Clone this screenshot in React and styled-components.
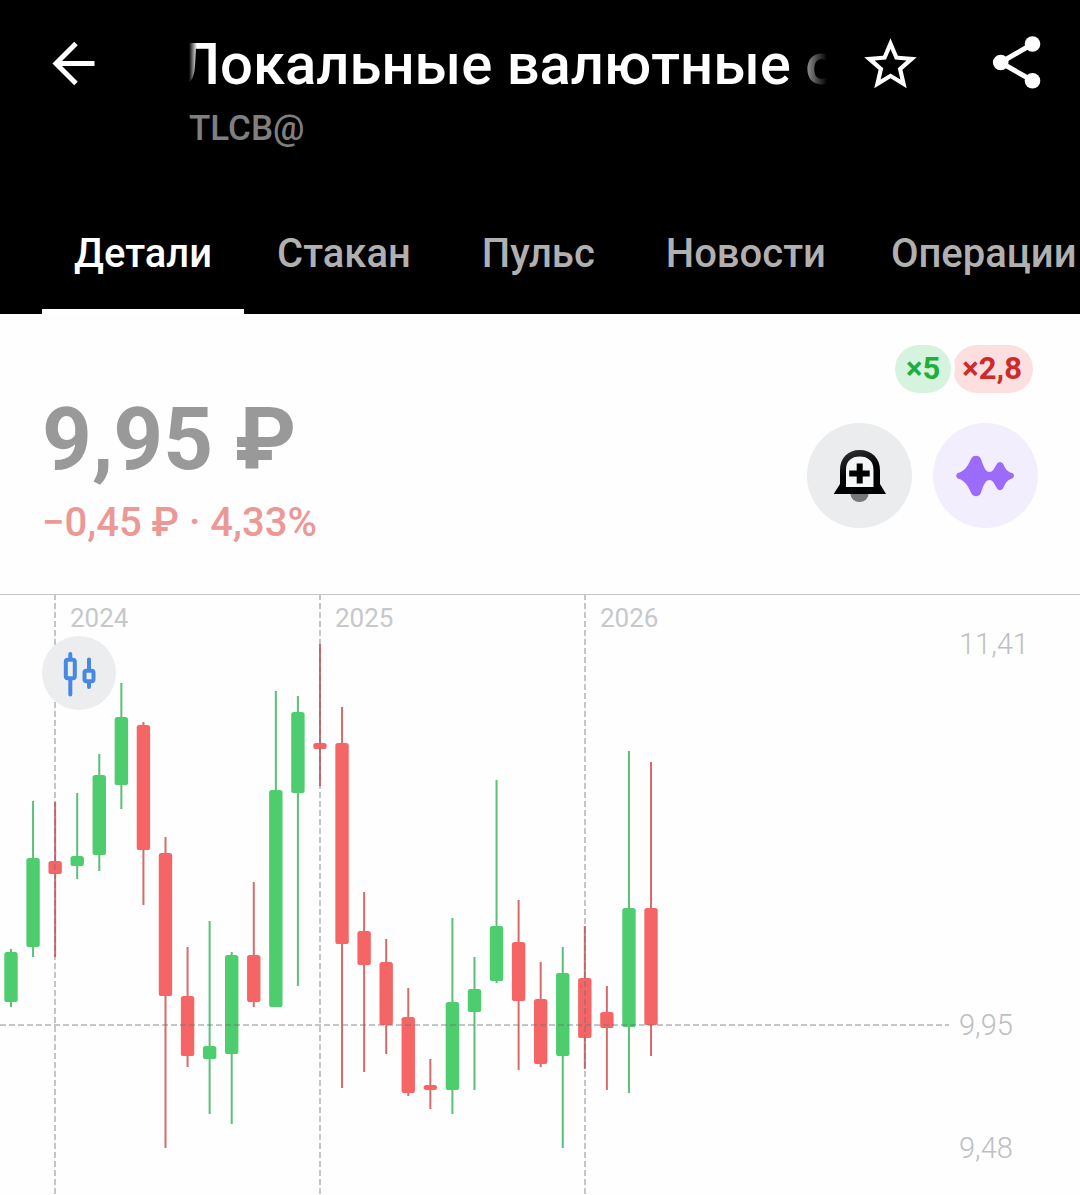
import React, { useState } from 'react'
import styled, { createGlobalStyle } from 'styled-components';

const tabs = ['Детали', 'Стакан', 'Пульс', 'Новости', 'Операции'];

const years = [
  { label: '2024', x: 55 },
  { label: '2025', x: 320 },
  { label: '2026', x: 585 },
];

const prices = [
  { label: '11,41', y: 654 },
  { label: '9,95', y: 1035 },
  { label: '9,48', y: 1158 },
];

// [direction, high, body top, body bottom, low]
const candles = [
  ['up', 949, 952, 1002, 1007],
  ['up', 801, 858, 947, 957],
  ['down', 802, 861, 874, 957],
  ['up', 793, 856, 866, 879],
  ['up', 754, 775, 855, 871],
  ['up', 683, 717, 785, 809],
  ['down', 722, 725, 850, 905],
  ['down', 837, 853, 996, 1148],
  ['down', 947, 996, 1056, 1067],
  ['up', 921, 1046, 1059, 1114],
  ['up', 952, 955, 1054, 1124],
  ['down', 882, 955, 1002, 1007],
  ['up', 691, 790, 1007, 1007],
  ['up', 696, 712, 793, 986],
  ['down', 644, 743, 749, 786],
  ['down', 707, 743, 944, 1088],
  ['down', 892, 931, 965, 1072],
  ['down', 939, 962, 1025, 1054],
  ['down', 988, 1017, 1093, 1096],
  ['down', 1059, 1085, 1090, 1109],
  ['up', 918, 1002, 1090, 1114],
  ['up', 957, 989, 1012, 1090],
  ['up', 780, 926, 981, 983],
  ['down', 900, 942, 1001, 1070],
  ['down', 962, 999, 1064, 1067],
  ['up', 947, 973, 1056, 1148],
  ['down', 926, 978, 1038, 1069],
  ['down', 986, 1012, 1028, 1090],
  ['up', 751, 908, 1027, 1093],
  ['down', 762, 908, 1025, 1056],
];

const colors = { up: '#4ecd6f', down: '#f66565' };
const wicks = { up: '#5abf78', down: '#d96a6a' };

const Chart = () => {
  return (
    <ChartSvg viewBox="0 595 1080 600" role="img" aria-label="График цены">
      {candles.map(([dir, high, top, bottom, low], i) => {
        const x = 11 + i * 22.07;
        return (
          <g key={i}>
            <line x1={x} x2={x} y1={high} y2={low} stroke={wicks[dir]} strokeWidth="2" />
            <rect x={x - 6.7} y={top} width="13.4" height={bottom - top} rx="2.6" fill={colors[dir]} />
          </g>
        );
      })}
      {years.map((year) => (
        <g key={year.label}>
          <GridLine x1={year.x} x2={year.x} y1="594" y2="1195" />
          <YearLabel x={year.x + 15} y="627">{year.label}</YearLabel>
        </g>
      ))}
      <GridLine x1="0" x2="949" y1="1025" y2="1025" />
      {prices.map((price) => (
        <PriceLabel key={price.label} x="959" y={price.y}>{price.label}</PriceLabel>
      ))}
    </ChartSvg>
  )
}

const BackIcon = () => (
  <svg width="64" height="64" viewBox="0 0 64 64" fill="none" stroke="currentColor" strokeWidth="5">
    <path d="M52.500 33.500H15M34 13.500L14 33.500L34 53.500" />
  </svg>
)

const StarIcon = () => (
  <svg width="63" height="63" viewBox="0 0 24 24" fill="currentColor">
    <path d="M22 9.24l-7.19-.62L12 2 9.19 8.63 2 9.24l5.46 4.73L5.82 21 12 17.27 18.18 21l-1.63-7.03L22 9.24zM12 15.4l-3.76 2.27 1-4.28-3.32-2.88 4.38-.38L12 6.1l1.71 4.04 4.38.38-3.32 2.88 1 4.28L12 15.4z" />
  </svg>
)

const ShareIcon = () => (
  <svg width="63" height="63" viewBox="0 0 63 63" fill="currentColor">
    <path d="M47.500 11L15.500 29.500L47.500 47.700" fill="none" stroke="currentColor" strokeWidth="5" />
    <circle cx="47.500" cy="11" r="7.800" />
    <circle cx="15.700" cy="29.500" r="7.800" />
    <circle cx="47.500" cy="47.700" r="7.800" />
  </svg>
)

const BellIcon = () => (
  <svg width="105" height="105" viewBox="0 0 105 105">
    <defs>
      <linearGradient id="bell" x1="0" y1="0" x2="0.4" y2="1">
        <stop offset="0" stopColor="#3a3b3c" />
        <stop offset="0.6" stopColor="#000" />
      </linearGradient>
    </defs>
    <path d="M43.500 71a9 8 0 0 0 18 0z" fill="#77787a" />
    <path d="M39 64V47C39 38 44 33.500 52.700 33.500S66.500 38 66.500 47V64z" fill="#f5f6f7" />
    <path fillRule="evenodd" fill="url(#bell)" d="M26.700 71L33 61V47C33 35 41 27 52.700 27S73 35 73 47V61L79 71ZM39 64H66.500V47C66.500 38 61 33.500 52.700 33.500S39 38 39 47Z" />
    <path d="M49.700 40.500H55.700V47.500H62.700V53.500H55.700V60.500H49.700V53.500H42.200V47.500H49.700Z" />
  </svg>
)

const WaveIcon = () => (
  <svg width="105" height="105" viewBox="0 0 105 105" fill="#9b6cf9">
    <path d="M25 50C31 48 34 45 38 36C39.500 31.500 46.500 31.500 48 36C51 45 53 49 56.500 49C59.500 49 61 46 63.500 41.500C65 38 69 38 70.500 41.500C72.500 46 74 48.500 79 50C81.700 51 81.700 54.500 79 55.500C74 57 72.500 60 70.500 64.500C69 68 65 68 63.500 64.500C61 60 59.500 57 56.500 57C53 57 51 60.500 48 69.500C46.500 74.500 39.500 74.500 38 69.500C34 60.500 31 57.500 25 55.500C22.700 54.500 22.700 51 25 50Z" />
  </svg>
)

const CandlesIcon = () => (
  <svg width="74" height="74" viewBox="0 0 74 74" fill="none" stroke="#4788e3" strokeWidth="4" strokeLinecap="round">
    <rect x="23.800" y="23.800" width="9" height="18.500" rx="2" />
    <path d="M28.300 18V22M28.300 44V58.500" />
    <rect x="42.500" y="34.800" width="9" height="10.500" rx="2" />
    <path d="M47 23.500V33M47 47V51" />
  </svg>
)

const App = () => {
  const [active, setActive] = useState('Детали');

  return (
    <>
    <GlobalStyle />
    <Header>
      <TopBar>
        <IconButton aria-label="Назад"><BackIcon /></IconButton>
        <Heading>
          <Title>Локальные валютные облигации</Title>
          <Ticker>TLCB@</Ticker>
        </Heading>
        <Actions>
          <IconButton aria-label="В избранное"><StarIcon /></IconButton>
          <IconButton aria-label="Поделиться"><ShareIcon /></IconButton>
        </Actions>
      </TopBar>
      <Tabs>
        {tabs.map((tab) => (
          <Tab key={tab} $active={tab === active} onClick={() => setActive(tab)}>{tab}</Tab>
        ))}
      </Tabs>
    </Header>
    <main>
      <Quote>
        <div>
          <Price>9,95 ₽</Price>
          <Change>−0,45 ₽ · 4,33%</Change>
        </div>
        <Side>
          <Badges>
            <Badge $color="#1fae3c" $bg="#d6f4dd" $front>×5</Badge>
            <Badge $color="#cf2a2a" $bg="#fddfe0">×2,8</Badge>
          </Badges>
          <RoundButtons>
            <RoundButton $size={105} $bg="#ebeced" aria-label="Уведомить о цене"><BellIcon /></RoundButton>
            <RoundButton $size={105} $bg="#f3eefe" aria-label="Пульс"><WaveIcon /></RoundButton>
          </RoundButtons>
        </Side>
      </Quote>
      <ChartArea>
        <Chart />
        <ChartType $size={74} $bg="#ebedee" aria-label="Тип графика"><CandlesIcon /></ChartType>
      </ChartArea>
    </main>
    </>
  )
}

const GlobalStyle = createGlobalStyle`
    * {
        box-sizing: border-box;
    }
    body {
        margin: 0;
        background: #fefefe;
        font-family: Roboto, "Noto Sans", sans-serif;
        overflow-x: hidden;
    }
    button {
        font-family: inherit;
        border: 0;
        padding: 0;
        background: none;
        cursor: pointer;
    }
    svg {
        display: block;
    }
`;

const Header = styled.header`
    background: #000;
    color: #fff;
`;

const TopBar = styled.div`
    display: flex;
    align-items: flex-start;
    padding: 30px 32px 47px 42px;
`;

const IconButton = styled.button`
    color: #fff;
    flex-shrink: 0;
`;

const Heading = styled.div`
    flex: 1;
    min-width: 0;
    margin-left: 83px;
`;

const Title = styled.h1`
    margin: 0;
    font-size: 58px;
    line-height: 68px;
    font-weight: 500;
    text-indent: -10px;
    white-space: nowrap;
    overflow: hidden;
    mask-image: linear-gradient(to right, transparent, #000 8px, #000 calc(100% - 36px), transparent);
`;

const Ticker = styled.p`
    margin: 11px 0 0;
    font-size: 35px;
    line-height: 40px;
    font-weight: 500;
    color: #7f7f7f;
`;

const Actions = styled.div`
    display: flex;
    gap: 63px;
    margin-left: 32px;
    padding-top: 3px;
`;

const Tabs = styled.nav`
    display: flex;
    gap: 1px;
    padding-left: 42px;
    overflow: hidden;
`;

const Tab = styled.button`
    flex-shrink: 0;
    min-width: 189px;
    padding: 34px 32px 31px;
    font-size: 40px;
    line-height: 48px;
    font-weight: 500;
    color: ${(props) => (props.$active ? '#fff' : '#b0b0b0')};
    border-bottom: 5px solid ${(props) => (props.$active ? '#fff' : 'transparent')};
`;

const Quote = styled.section`
    display: flex;
    justify-content: space-between;
    align-items: flex-start;
    padding: 31px 42px 47px;
    border-bottom: 1px solid #c4c6c8;
`;

const Price = styled.p`
    margin: 42px 0 0;
    font-size: 87px;
    line-height: 104px;
    font-weight: 700;
    color: #999;
`;

const Change = styled.p`
    margin: 8px 0 0;
    font-size: 40px;
    line-height: 48px;
    font-weight: 500;
    color: #eb9896;
`;

const Side = styled.div`
    display: flex;
    flex-direction: column;
    align-items: flex-end;
    gap: 30px;
`;

const Badges = styled.div`
    display: flex;
    gap: 2px;
    padding-right: 5px;
`;

const Badge = styled.span`
    position: relative;
    z-index: ${(props) => (props.$front ? 1 : 0)};
    padding: 0 11px 0 ${(props) => (props.$front ? 11 : 9)}px;
    border-radius: 24px;
    font-size: 31px;
    line-height: 48px;
    font-weight: 700;
    color: ${(props) => props.$color};
    background: ${(props) => props.$bg};
    box-shadow: ${(props) => (props.$front ? '0 0 0 4px #fefefe' : 'none')};
`;

const RoundButtons = styled.div`
    display: flex;
    gap: 21px;
`;

const RoundButton = styled.button`
    width: ${(props) => props.$size}px;
    height: ${(props) => props.$size}px;
    border-radius: 50%;
    background: ${(props) => props.$bg};
`;

const ChartArea = styled.section`
    position: relative;
`;

const ChartSvg = styled.svg`
    width: 100%;
    height: auto;
`;

const GridLine = styled.line`
    stroke: rgba(110, 112, 115, 0.4);
    stroke-width: 2;
    stroke-dasharray: 6 3;
`;

const YearLabel = styled.text`
    font-size: 26px;
    fill: #c6c8ca;
`;

const PriceLabel = styled.text`
    font-size: 29px;
    font-weight: 300;
    fill: #bdbfc1;
`;

// sits over the top left corner of the chart
const ChartType = styled(RoundButton)`
    position: absolute;
    top: 41px;
    left: 42px;
`;

export default App;
